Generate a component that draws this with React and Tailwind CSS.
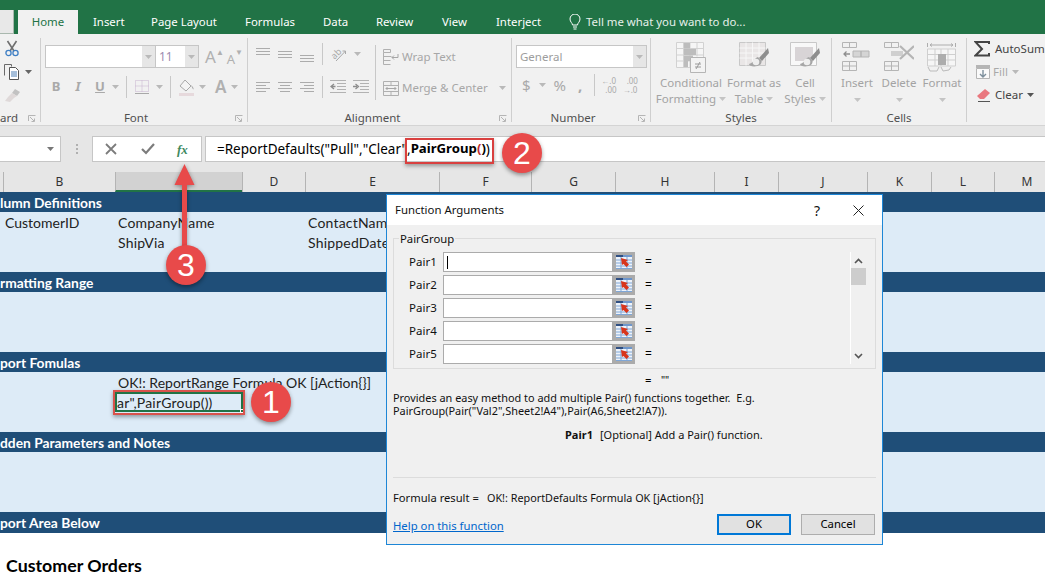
import { Fragment } from "react";

const UI = "font-['Noto_Sans','Open_Sans',sans-serif]";
const CELL = "font-['Lato','Open_Sans',sans-serif]";

const TABS = [
  { name: "Insert", w: 58 },
  { name: "Page Layout", w: 94 },
  { name: "Formulas", w: 78 },
  { name: "Data", w: 53 },
  { name: "Review", w: 66 },
  { name: "View", w: 54 },
  { name: "Interject", w: 71 },
];

const COLUMNS = [
  { name: "B", w: 112 },
  { name: "", w: 127, selected: true },
  { name: "D", w: 63 },
  { name: "E", w: 134 },
  { name: "F", w: 92 },
  { name: "G", w: 84 },
  { name: "H", w: 99 },
  { name: "I", w: 64 },
  { name: "J", w: 89 },
  { name: "K", w: 64 },
  { name: "L", w: 63 },
  { name: "M", w: 65 },
];

function Caret({ className = "", color = "#b9b9b9" }) {
  return (
    <svg width="7" height="4" viewBox="0 0 7 4" className={`shrink-0 ${className}`}>
      <path d="M0 0h7L3.5 4z" fill={color} />
    </svg>
  );
}

function Launcher() {
  return (
    <svg width="8" height="8" viewBox="0 0 8 8" className="absolute right-[4px] top-[4px]">
      <path d="M.5 6V.5H7.5M2 2l4 4M3.5 6.5H6.5V3.5" fill="none" stroke="#b5b5b5" />
    </svg>
  );
}

function Sep({ className = "" }) {
  return <div className={`w-px h-[22px] bg-[#c8c8c8] shrink-0 ${className}`} />;
}

// stack of horizontal strokes, used by the alignment buttons
function Lines({ rows, top = 0 }) {
  return (
    <svg width="15" height="16" viewBox="0 0 15 16" className="shrink-0">
      {rows.map((r, i) => (
        <path key={i} d={`M${r[0]} ${top + i * 3 + 0.5}H${r[1]}`} stroke="#acacac" />
      ))}
    </svg>
  );
}

function Group({ w, label, launcher, labelClass = "", children }) {
  return (
    <div className="relative flex flex-col shrink-0 h-[84px] mt-[4px] border-r border-[#cfcfcf]" style={{ width: w }}>
      <div className="h-[73px] shrink-0">{children}</div>
      <div className={`h-[14px] text-[11.5px] leading-[14px] text-[#505050] text-center ${labelClass}`}>{label}</div>
      {launcher && (
        <div className="absolute right-0 bottom-[-3px] w-[16px] h-[14px]">
          <Launcher />
        </div>
      )}
    </div>
  );
}

function Scissors() {
  return (
    <svg width="16" height="17" viewBox="0 0 16 17" className="ml-[4px]">
      <path d="M3.5 1l6.5 10M12.5 1L6 11" stroke="#6f6f6f" strokeWidth="1.6" fill="none" />
      <circle cx="4.5" cy="13" r="2.6" fill="none" stroke="#3f7fc4" strokeWidth="1.3" />
      <circle cx="11.5" cy="13" r="2.6" fill="none" stroke="#3f7fc4" strokeWidth="1.3" />
    </svg>
  );
}

function CopyIcon() {
  return (
    <svg width="16" height="16" viewBox="0 0 16 16">
      <path d="M.5 11.5V.5h7v2" fill="none" stroke="#6a6a6a" />
      <path d="M5.5 3.5h6l3 3v9h-9z" fill="#fff" stroke="#555" />
      <path d="M7 8h6M7 10h6M7 12h6" stroke="#4d7fb5" />
    </svg>
  );
}

function BrushIcon() {
  return (
    <svg width="17" height="15" viewBox="0 0 17 15" className="ml-[4px]">
      <path d="M11 1l5 3-3 4-5-3z" fill="#c2c2c2" />
      <path d="M8 5l5 3-3 2-4 4-5-1 3-4z" fill="#dfd9d9" />
    </svg>
  );
}

function BorderIcon() {
  return (
    <svg width="14" height="14" viewBox="0 0 14 14">
      <path d="M.5.5h13v11H.5zM7 .5v11M.5 6h13" fill="none" stroke="#c7b3cf" strokeDasharray="1 1" />
      <path d="M0 13.5h14" stroke="#a8a8a8" />
    </svg>
  );
}

function FillIcon() {
  return (
    <svg width="17" height="17" viewBox="0 0 17 17">
      <path d="M7 1l6 6-5 5-6-5z" fill="#f4f4f4" stroke="#a9a9a9" />
      <path d="M13 6c2 2 3 3 2.5 4.5-1-.5-1.5-2-2.5-4.5z" fill="#a9a9a9" />
      <path d="M1 14h15v3H1z" fill="#e6d9dc" />
    </svg>
  );
}

function WrapIcon() {
  return (
    <svg width="16" height="16" viewBox="0 0 16 16" className="shrink-0">
      <path d="M.5.5h7v3h-7zM.5 3.5v12h7M.5 7.5h8M.5 11.5h7" fill="none" stroke="#b0b0b0" />
      <path d="M15 5v3.5H9M11 6.5L9 8.5l2 2" fill="none" stroke="#a5a5a5" />
    </svg>
  );
}

function MergeIcon() {
  return (
    <svg width="16" height="15" viewBox="0 0 16 15" className="shrink-0">
      <path d="M.5.5h15v14H.5zM.5 4.5h15M.5 10.5h15M8 .5v4M8 10.5v4" fill="none" stroke="#b0b0b0" />
      <path d="M3 7.5h10M4.5 6L3 7.5 4.5 9M11.5 6L13 7.5 11.5 9" fill="none" stroke="#a5a5a5" />
    </svg>
  );
}

function OrientIcon() {
  return (
    <svg width="17" height="15" viewBox="0 0 17 15" className="shrink-0 overflow-visible">
      <text x="1" y="10" fontSize="9" fill="#a8a8a8" transform="rotate(-45 6 7)" fontFamily="Noto Sans">ab</text>
      <path d="M6 14L15.5 4M12.5 4h3v3" fill="none" stroke="#a8a8a8" />
    </svg>
  );
}

function IndentIcon({ flip }) {
  return (
    <svg width="16" height="14" viewBox="0 0 16 14" className="shrink-0">
      <path d="M0 .5h16M7 3.5h9M7 6.5h9M7 9.5h9M0 12.5h16" stroke="#b2b2b2" />
      <path d={flip ? "M0 6.5h4M2.5 4L5.5 6.5 2.5 9" : "M5.5 6.5h-4M4 4L1 6.5 4 9"} fill="none" stroke="#8d8d8d" strokeWidth="1.3" />
    </svg>
  );
}

function CondIcon() {
  return (
    <svg width="30" height="31" viewBox="0 0 30 31">
      <path d="M.5.5h27v25H.5zM.5 6.5h27M.5 13h27M.5 19h20M7.5.5v25M14 .5v25M21 .5v14" fill="#f6f6f6" stroke="#d2d2d2" />
      <path d="M8 1h6v5.5H8zM8 7h12v6H8zM8 13.5h9V19H8zM8 19h4v6H8z" fill="#bdbdbd" />
      <path d="M14.5 15.5h15v15h-15z" fill="#f3f3f3" stroke="#b5b5b5" />
      <path d="M19 22h6M19 25h6M24 20l-4 7" stroke="#9a9a9a" fill="none" />
    </svg>
  );
}

function TableIcon({ cell }) {
  return (
    <svg width="30" height="30" viewBox="0 0 30 30">
      <path d="M.5.5h26v23H.5z" fill={cell ? "#f8f8f8" : "#e9e6e6"} stroke="#c8c8c8" />
      {!cell && <path d="M.5 6h26M.5 11h26M.5 16h26M7 .5v23M13.5.5v23M20 .5v23" stroke="#f7f7f7" />}
      {cell && <path d="M5 5h18v14H5z" fill="#d8d4d6" />}
      <path d="M29 6l-9 10 3 3 7-8z" fill="#8e8e8e" />
      <path d="M19 15c-4 1-3 5-9 7 0 3 8 3 11 1 2-2 2-5 1-5z" fill="#a6a6a6" />
      <circle cx="17" cy="20" r="3.3" fill="#eee" />
    </svg>
  );
}

function InsertCellIcon({ del }) {
  return (
    <svg width="30" height="30" viewBox="0 0 30 30">
      <path d="M.5.5h14v5H.5zM7.5.5v5M.5 19.5h14v9H.5zM.5 24h14M7.5 19.5v9" fill="none" stroke="#b5b5b5" />
      {del ? (
        <Fragment>
          <path d="M7 9h12v5H7z" fill="#cfcfcf" />
          <path d="M16 4l14 13M30 4L16 17" stroke="#b5b5b5" strokeWidth="2.2" />
        </Fragment>
      ) : (
        <Fragment>
          <path d="M11 9h8v6h-8zM19 9h8v6h-8z" fill="#d5d5d5" stroke="#b5b5b5" />
          <path d="M8 12H2M4.5 9.5L2 12l2.5 2.5" fill="none" stroke="#8e8e8e" strokeWidth="1.3" />
        </Fragment>
      )}
    </svg>
  );
}

function FormatCellIcon() {
  return (
    <svg width="30" height="31" viewBox="0 0 30 31">
      <path d="M.5 1v4M28.5 1v4M3 3h23M3 3l2-1.500M3 3l2 1.500M26 3l-2-1.500M26 3l-2 1.500" fill="none" stroke="#adadad" />
      <path d="M.5 7h28v17H.5zM.5 12.500h28M.5 18h28M8 7v17M14 7v17M21 7v17" fill="#f6f6f6" stroke="#cfcfcf" />
      <path d="M11 12h8v11h-8z" fill="#adadad" />
      <path d="M1 25l2 4h7l2-4M14 25l2 4 6-1 2-3" fill="none" stroke="#bbb" />
    </svg>
  );
}

function SigmaIcon() {
  return (
    <svg width="16" height="16" viewBox="0 0 16 16" className="shrink-0">
      <path d="M15 3V1H1.5L8 8l-6.5 6.5H15V12" fill="none" stroke="#444" strokeWidth="2" />
    </svg>
  );
}

function FillDownIcon() {
  return (
    <svg width="14" height="14" viewBox="0 0 14 14" className="shrink-0">
      <path d="M0 0h14v3H0z" fill="#b5b5b5" />
      <path d="M.5 3.5h13v10H.5z" fill="#fafafa" stroke="#b5b5b5" />
      <path d="M7 5v7M4 9l3 3 3-3" fill="none" stroke="#7d8f9c" strokeWidth="1.4" />
    </svg>
  );
}

function EraserIcon() {
  return (
    <svg width="15" height="14" viewBox="0 0 15 14" className="shrink-0">
      <path d="M9 1l5 4-6 6H4L1 8z" fill="#e9787f" />
      <path d="M2 13.5h12" stroke="#555" />
    </svg>
  );
}

function BigButton({ w, icon, first, second, caretOnly, iconPad = "" }) {
  return (
    <div className="flex flex-col items-center shrink-0 text-[11.5px] leading-[16px] text-[#a3a3a3]" style={{ width: w }}>
      <div className={`h-[37px] pt-[4px] ${iconPad}`}>{icon}</div>
      <div className="h-[16px] whitespace-nowrap">{first}</div>
      {caretOnly ? (
        <Caret className="mt-[7px]" color="#c4c4c4" />
      ) : (
        <div className="h-[16px] flex items-center gap-[3px] whitespace-nowrap">
          {second}
          <Caret color="#c4c4c4" />
        </div>
      )}
    </div>
  );
}

function Ribbon() {
  return (
    <div className={`flex h-[92px] bg-[#f1f1f1] border-b border-[#d4d4d4] overflow-hidden ${UI}`}>
      <Group w={41} label="ard" labelClass="!text-left pl-0" launcher>
        <div className="flex flex-col pt-[2px]">
          <Scissors />
          <div className="flex items-center gap-[5px] mt-[7px] ml-[4px]">
            <CopyIcon />
            <Caret color="#666" />
          </div>
          <div className="mt-[8px]">
            <BrushIcon />
          </div>
        </div>
      </Group>

      <Group w={207} label="Font" labelClass="pr-[16px]" launcher>
        <div className="flex items-start pl-[4px] pt-[7px]">
          <div className="flex w-[111px] h-[23px] bg-white border border-[#c6c6c6]">
            <div className="flex-1" />
            <div className="w-[13px] bg-[#e6e6e6] flex items-center justify-center">
              <Caret />
            </div>
          </div>
          <div className="flex w-[43px] h-[23px] bg-white border border-l-0 border-[#c6c6c6]">
            <span className="flex-1 pl-[3px] text-[12px] leading-[21px] text-[#9c8cb0]">11</span>
            <div className="w-[13px] bg-[#e6e6e6] flex items-center justify-center">
              <Caret />
            </div>
          </div>
          <span className="ml-[6px] text-[17px] leading-[24px] text-[#b0b0b0]">A</span>
          <span className="-mt-[1px] text-[8px] leading-[16px] text-[#b0b0b0]">▲</span>
          <span className="ml-[3px] mt-[3px] text-[13px] leading-[22px] text-[#b0b0b0]">A</span>
          <span className="-mt-[1px] text-[8px] leading-[16px] text-[#b0b0b0]">▼</span>
        </div>
        <div className="flex items-center h-[24px] mt-[5px] pl-[4px]">
          <span className="w-[22px] text-center font-bold text-[13px] text-[#a9a9a9]">B</span>
          <span className="w-[22px] text-center italic font-bold text-[13px] text-[#a9a9a9]">I</span>
          <span className="w-[22px] text-center font-bold underline text-[13px] text-[#a9a9a9]">U</span>
          <Caret className="ml-[1px]" />
          <Sep className="ml-[7px]" />
          <div className="ml-[8px]">
            <BorderIcon />
          </div>
          <Caret className="ml-[7px]" />
          <Sep className="ml-[7px]" />
          <div className="ml-[7px] flex">
            <FillIcon />
          </div>
          <Caret className="ml-[4px]" />
          <span className="ml-[9px] text-[17px] font-semibold leading-[22px] text-[#b0b0b0]">A</span>
          <Caret className="ml-[5px]" />
        </div>
      </Group>

      <Group w={264} label="Alignment" labelClass="pr-[14px]" launcher>
        <div className="flex pl-[8px] pt-[4px]">
          <div className="flex flex-col">
            <div className="flex items-center h-[24px] gap-[7px]">
              <Lines rows={[[0, 14], [0, 14], [0, 14]]} top={2} />
              <Lines rows={[[0, 14], [0, 14], [0, 14]]} top={5} />
              <Lines rows={[[0, 14], [0, 14], [0, 14]]} top={9} />
              <Sep />
              <OrientIcon />
              <Caret />
            </div>
            <div className="flex items-center h-[24px] gap-[7px] mt-[9px]">
              <Lines rows={[[0, 14], [0, 10], [0, 14], [0, 10]]} top={3} />
              <Lines rows={[[0, 14], [2, 12], [0, 14], [2, 12]]} top={3} />
              <Lines rows={[[0, 14], [4, 14], [0, 14], [4, 14]]} top={3} />
              <Sep />
              <IndentIcon />
              <IndentIcon flip />
            </div>
          </div>
          <Sep className="!h-[55px] ml-[6px] mt-[3px]" />
          <div className="flex flex-col ml-[7px] pt-[3px] text-[11.5px] text-[#a7a7a7] whitespace-nowrap">
            <div className="flex items-center h-[24px] gap-[3px]">
              <WrapIcon />
              Wrap Text
            </div>
            <div className="flex items-center h-[24px] gap-[3px] mt-[7px]">
              <MergeIcon />
              Merge &amp; Center
              <Caret className="ml-[8px]" />
            </div>
          </div>
        </div>
      </Group>

      <Group w={139} label="Number" labelClass="pr-[16px]" launcher>
        <div className="pl-[4px] pt-[7px]">
          <div className="flex w-[131px] h-[23px] bg-white border border-[#c6c6c6]">
            <span className="flex-1 pl-[3px] text-[11.5px] leading-[21px] text-[#9d9d9d]">General</span>
            <div className="w-[13px] bg-[#e6e6e6] flex items-center justify-center">
              <Caret />
            </div>
          </div>
          <div className="flex items-center h-[24px] mt-[5px] text-[#a9a9a9]">
            <span className="ml-[6px] text-[15px]">$</span>
            <Caret className="ml-[8px]" />
            <span className="ml-[8px] text-[15px]">%</span>
            <span className="ml-[12px] text-[15px] font-bold">,</span>
            <Sep className="ml-[12px]" />
            <div className="ml-[6px] flex flex-col text-[8px] leading-[9px]">
              <span>←.0</span>
              <span className="pl-[4px]">.00</span>
            </div>
            <div className="ml-[6px] flex flex-col text-[8px] leading-[9px]">
              <span className="pl-[4px]">.00</span>
              <span>→.0</span>
            </div>
          </div>
        </div>
      </Group>

      <Group w={181} label="Styles">
        <div className="flex pl-[7px]">
          <BigButton w={66} icon={<CondIcon />} first="Conditional" second="Formatting" iconPad="-ml-[1px]" />
          <BigButton w={60} icon={<TableIcon />} first="Format as" second="Table" />
          <BigButton w={42} icon={<TableIcon cell />} first="Cell" second="Styles" />
        </div>
      </Group>

      <Group w={135} label="Cells">
        <div className="flex pl-[4px]">
          <BigButton w={42} icon={<InsertCellIcon />} first="Insert" caretOnly />
          <BigButton w={42} icon={<InsertCellIcon del />} first="Delete" caretOnly />
          <BigButton w={44} icon={<FormatCellIcon />} first="Format" caretOnly />
        </div>
      </Group>

      <div className="flex flex-col pl-[7px] pt-[6px] text-[11.5px] text-[#444] whitespace-nowrap">
        <div className="flex items-center h-[18px] gap-[5px]">
          <SigmaIcon />
          AutoSum
        </div>
        <div className="flex items-center h-[18px] gap-[3px] mt-[5px] ml-[2px] text-[#a9a9a9]">
          <FillDownIcon />
          Fill
          <Caret className="ml-[1px]" />
        </div>
        <div className="flex items-center h-[18px] gap-[4px] mt-[5px] ml-[2px]">
          <EraserIcon />
          Clear
          <Caret color="#555" />
        </div>
      </div>
    </div>
  );
}

function FormulaBar() {
  return (
    <div className={`flex h-[46px] pt-[10px] bg-[#e6e6e6] ${UI}`}>
      <div className="flex items-center justify-end w-[61px] h-[26px] bg-white border border-l-0 border-[#c6c6c6] pr-[6px]">
        <Caret color="#777" />
      </div>
      <div className="w-[31px] flex flex-col items-center justify-center gap-[2px] h-[26px]">
        <span className="w-[2px] h-[2px] bg-[#b0b0b0]" />
        <span className="w-[2px] h-[2px] bg-[#b0b0b0]" />
        <span className="w-[2px] h-[2px] bg-[#b0b0b0]" />
      </div>
      <div className="flex items-center w-[110px] h-[26px] bg-white border border-[#c6c6c6]">
        <svg width="12" height="12" viewBox="0 0 12 12" className="ml-[12px]">
          <path d="M1 1l10 10M11 1L1 11" stroke="#7c7c7c" strokeWidth="1.8" />
        </svg>
        <svg width="14" height="12" viewBox="0 0 14 12" className="ml-[24px]">
          <path d="M1 6l4 4 8-9" fill="none" stroke="#7c7c7c" strokeWidth="2.2" />
        </svg>
        <span className="ml-[22px] font-['Liberation_Serif',serif] italic font-bold text-[13px] leading-none text-[#3f8a5f]">fx</span>
      </div>
      <div className="flex items-center flex-1 h-[26px] ml-[3px] bg-white border border-r-0 border-[#c6c6c6] pl-[11px] text-[13.5px] text-black whitespace-nowrap">
        <span>=ReportDefaults("Pull","Clear",</span>
        <span className="font-bold text-[13.2px]">PairGroup</span>
        <span className="font-bold text-[13.2px] text-[#c0302f]">(</span>
        <span className="font-bold text-[13.2px]">)</span>
        <span>)</span>
      </div>
    </div>
  );
}

function ColumnHeaders() {
  return (
    <div className={`flex h-[20px] bg-[#e6e6e6] pl-[3px] text-[12px] leading-[22px] text-[#333] overflow-hidden ${UI}`}>
      {COLUMNS.map((c, i) => (
        <div
          key={i}
          style={{ width: c.w }}
          className={`shrink-0 flex items-center justify-center border-l border-[#b4b4b4] ${
            c.selected ? "bg-[#d2d2d2] border-b-2 border-b-[#217346]" : ""
          }`}
        >
          {c.name}
        </div>
      ))}
    </div>
  );
}

function SectionHead({ children }) {
  return (
    <div className="h-[20px] bg-[#1f4e78] text-white font-bold text-[13.8px] leading-[22px] whitespace-nowrap">{children}</div>
  );
}

function CellRow({ a, b, c, tight }) {
  return (
    <div className={`grid grid-cols-[115px_190px_1fr] h-[20px] text-[14px] leading-[22px] text-[#222] whitespace-nowrap ${tight ? "" : "tracking-[0.2px]"}`}>
      <div className="pl-[5px] tracking-normal">{a}</div>
      <div className="pl-[3px]">{b}</div>
      <div className="pl-[3px]">{c}</div>
    </div>
  );
}

function LightBlock({ children }) {
  return <div className="h-[60px] bg-[#ddebf7]">{children}</div>;
}

function Sheet() {
  return (
    <div className={`flex-1 bg-white ${CELL}`}>
      <SectionHead>lumn Definitions</SectionHead>
      <LightBlock>
        <CellRow a="CustomerID" b="CompanyName" c="ContactName" />
        <CellRow b="ShipVia" c="ShippedDate" />
      </LightBlock>
      <SectionHead>rmatting Range</SectionHead>
      <LightBlock />
      <SectionHead>port Fomulas</SectionHead>
      <LightBlock>
        <CellRow tight b="OK!: ReportRange Formula OK [jAction{}]" />
        <div className="flex h-[20px] pl-[115px]">
          <div className="relative w-[128px] h-[20px] bg-[#ddebf7] border-2 border-[#217346] text-[14px] tracking-[0.2px] leading-[18px] text-[#222] whitespace-nowrap">
            ar",PairGroup())
            <span className="absolute right-[-3px] bottom-[-3px] w-[4px] h-[4px] bg-[#217346] border border-white" />
          </div>
        </div>
      </LightBlock>
      <SectionHead>dden Parameters and Notes</SectionHead>
      <LightBlock />
      <div className="h-[21px] bg-[#1f4e78] text-white font-bold text-[13.8px] leading-[22px]">port Area Below</div>
      <div className="pl-[6px] pt-[22px] font-bold text-[17.8px] leading-[20px] text-black">Customer Orders</div>
    </div>
  );
}

function RefEditButton() {
  return (
    <div className="flex items-center justify-center w-[22px] h-[20px] bg-[#ababab] shrink-0">
      <svg width="16" height="14" viewBox="0 0 16 14">
        <path d="M0 0h16v14H0z" fill="#eef3fa" />
        <path d="M0 1h7" stroke="#2f4f83" strokeWidth="2" />
        <path d="M7 1h9" stroke="#6f97cc" strokeWidth="2" />
        <path d="M0 5h16M0 8h16M0 11h16M0 13.5h16M5 2v12M11 2v12" stroke="#7fa6d6" />
        <path d="M5 3l7 2-2 1.5 3 3-2.5 2.5-3-3L6 10z" fill="#d8351c" />
      </svg>
    </div>
  );
}

function ArgRow({ label, cursor }) {
  return (
    <div className="flex items-center h-[20px] mb-[3px]">
      <span className="w-[34px] text-[11.5px] text-[#111]">{label}</span>
      <div className="flex items-center w-[170px] h-[20px] bg-white border border-[#ababab] pl-[3px]">
        {cursor && <span className="w-px h-[13px] bg-black" />}
      </div>
      <RefEditButton />
      <span className="ml-[10px] text-[12px] text-black">=</span>
    </div>
  );
}

function FunctionArguments() {
  return (
    <div className={`absolute left-[386px] top-[194px] w-[497px] h-[351px] flex flex-col bg-[#f0f0f0] border border-[#1d86d6] text-[11.3px] text-[#111] ${UI}`}>
      <div className="flex items-center h-[30px] bg-white pl-[8px] shrink-0">
        <span className="flex-1 text-[11.4px]">Function Arguments</span>
        <span className="text-[14px] mr-[33px]">?</span>
        <svg width="11" height="11" viewBox="0 0 11 11" className="mr-[18px]">
          <path d="M.5.5l10 10M10.5.5l-10 10" stroke="#222" />
        </svg>
      </div>
      <div className="relative mx-[6px] mt-[13px] h-[131px] border border-[#dcdcdc] pl-[15px] pt-[13px] shrink-0">
        <span className="absolute left-[5px] -top-[7px] leading-[14px] px-[1px] bg-[#f0f0f0]">PairGroup</span>
        {["Pair1", "Pair2", "Pair3", "Pair4", "Pair5"].map((p, i) => (
          <ArgRow key={p} label={p} cursor={i === 0} />
        ))}
        <div className="absolute left-[456px] top-[13px] flex flex-col items-center w-[16px] h-[112px] border-l border-white">
          <svg width="9" height="6" viewBox="0 0 9 6" className="mt-[6px]">
            <path d="M1 5l3.5-3.5L8 5" fill="none" stroke="#555" strokeWidth="1.6" />
          </svg>
          <div className="w-[15px] h-[17px] mt-[4px] bg-[#cdcdcd]" />
          <svg width="9" height="6" viewBox="0 0 9 6" className="mt-auto mb-[5px]">
            <path d="M1 1l3.5 3.5L8 1" fill="none" stroke="#555" strokeWidth="1.6" />
          </svg>
        </div>
      </div>
      <div className="flex h-[14px] pl-[258px] mt-[4px] leading-[14px] text-black shrink-0">
        <span className="w-[16px]">=</span>
        <span className="text-[10px]">""</span>
      </div>
      <div className="pl-[6px] mt-[4px] text-[10.9px] leading-[13px] whitespace-pre shrink-0">
        {'Provides an easy method to add multiple Pair() functions together.  E.g.\nPairGroup(Pair("Val2",Sheet2!A4"),Pair(A6,Sheet2!A7)).'}
      </div>
      <div className="flex mt-[10px] pl-[178px] text-[11px] leading-[16px] shrink-0">
        <span className="w-[35px] font-bold">Pair1</span>
        <span>[Optional] Add a Pair() function.</span>
      </div>
      <div className="mx-[6px] mt-[34px] border-t border-[#dcdcdc] shrink-0" />
      <div className="flex mt-[12px] pl-[6px] leading-[16px] shrink-0">
        <span className="w-[94px] text-[11.2px]">Formula result =</span>
        <span className="text-[10.8px]">OK!: ReportDefaults Formula OK [jAction{"{}"}]</span>
      </div>
      <div className="flex items-center mt-[8px] pl-[6px] pr-[7px] shrink-0">
        <span className="flex-1 mt-[3px] text-[#0066cc] underline">Help on this function</span>
        <div className="flex items-center justify-center w-[74px] h-[21px] bg-[#e1e1e1] border-2 border-[#0078d7] text-black">OK</div>
        <div className="flex items-center justify-center w-[74px] h-[21px] ml-[10px] bg-[#e1e1e1] border border-[#adadad] text-black">Cancel</div>
      </div>
    </div>
  );
}

function Badge({ n, className }) {
  return (
    <div className={`absolute flex items-center justify-center w-[40px] h-[40px] rounded-full bg-[#e84a4a] text-white text-[32px] leading-none shadow-[0_2px_4px_rgba(0,0,0,0.4)] font-['Liberation_Sans',sans-serif] ${className}`}>
      {n}
    </div>
  );
}

function Annotations() {
  return (
    <Fragment>
      <div className="absolute left-[405px] top-[138px] w-[89px] h-[26px] border-2 border-[#d9403f] shadow-[0_2px_4px_rgba(0,0,0,0.35)]" />
      <div className="absolute left-[113px] top-[390px] w-[132px] h-[25px] border-2 border-[#d9534c] shadow-[0_2px_4px_rgba(0,0,0,0.35)]" />
      <svg width="24" height="90" viewBox="0 0 24 90" className="absolute left-[173px] top-[163px] drop-shadow-[0_1px_2px_rgba(0,0,0,0.4)]">
        <path d="M11.5 1L21.5 22H14V88H9V22H1.5z" fill="#e84a4a" />
      </svg>
      <Badge n="3" className="left-[166px] top-[245px]" />
      <Badge n="2" className="left-[502px] top-[133px]" />
      <Badge n="1" className="left-[251px] top-[382px]" />
    </Fragment>
  );
}

export default function App() {
  return (
    <div className="relative flex flex-col w-[1045px] h-[585px] overflow-hidden bg-white">
      <div className={`flex h-[34px] pt-[10px] bg-[#217346] text-[11.4px] text-white ${UI}`}>
        <div className="w-[14px] h-[24px] bg-[#e8e8e8] border-r border-b border-[#a9b8ae]" />
        <div className="w-[4px]" />
        <div className="flex items-center justify-center w-[60px] h-[24px] bg-[#f1f1f1] text-[#217346]">Home</div>
        <div className="w-[15px]" />
        {TABS.map((t) => (
          <div key={t.name} style={{ width: t.w }} className="h-[24px] leading-[24px] shrink-0 whitespace-nowrap">
            {t.name}
          </div>
        ))}
        <svg width="14" height="16" viewBox="0 0 14 16" className="mt-[4px] ml-[1px]">
          <path d="M4.5 11c0-2-2.5-3-2.5-6a5 5 0 0 1 10 0c0 3-2.5 4-2.500 6zM5 13h4M5.5 15h3" fill="none" stroke="#fff" />
        </svg>
        <span className="ml-[4px] leading-[24px] text-[#e6f0ea]">Tell me what you want to do...</span>
      </div>
      <Ribbon />
      <FormulaBar />
      <ColumnHeaders />
      <Sheet />
      <FunctionArguments />
      <Annotations />
    </div>
  );
}
